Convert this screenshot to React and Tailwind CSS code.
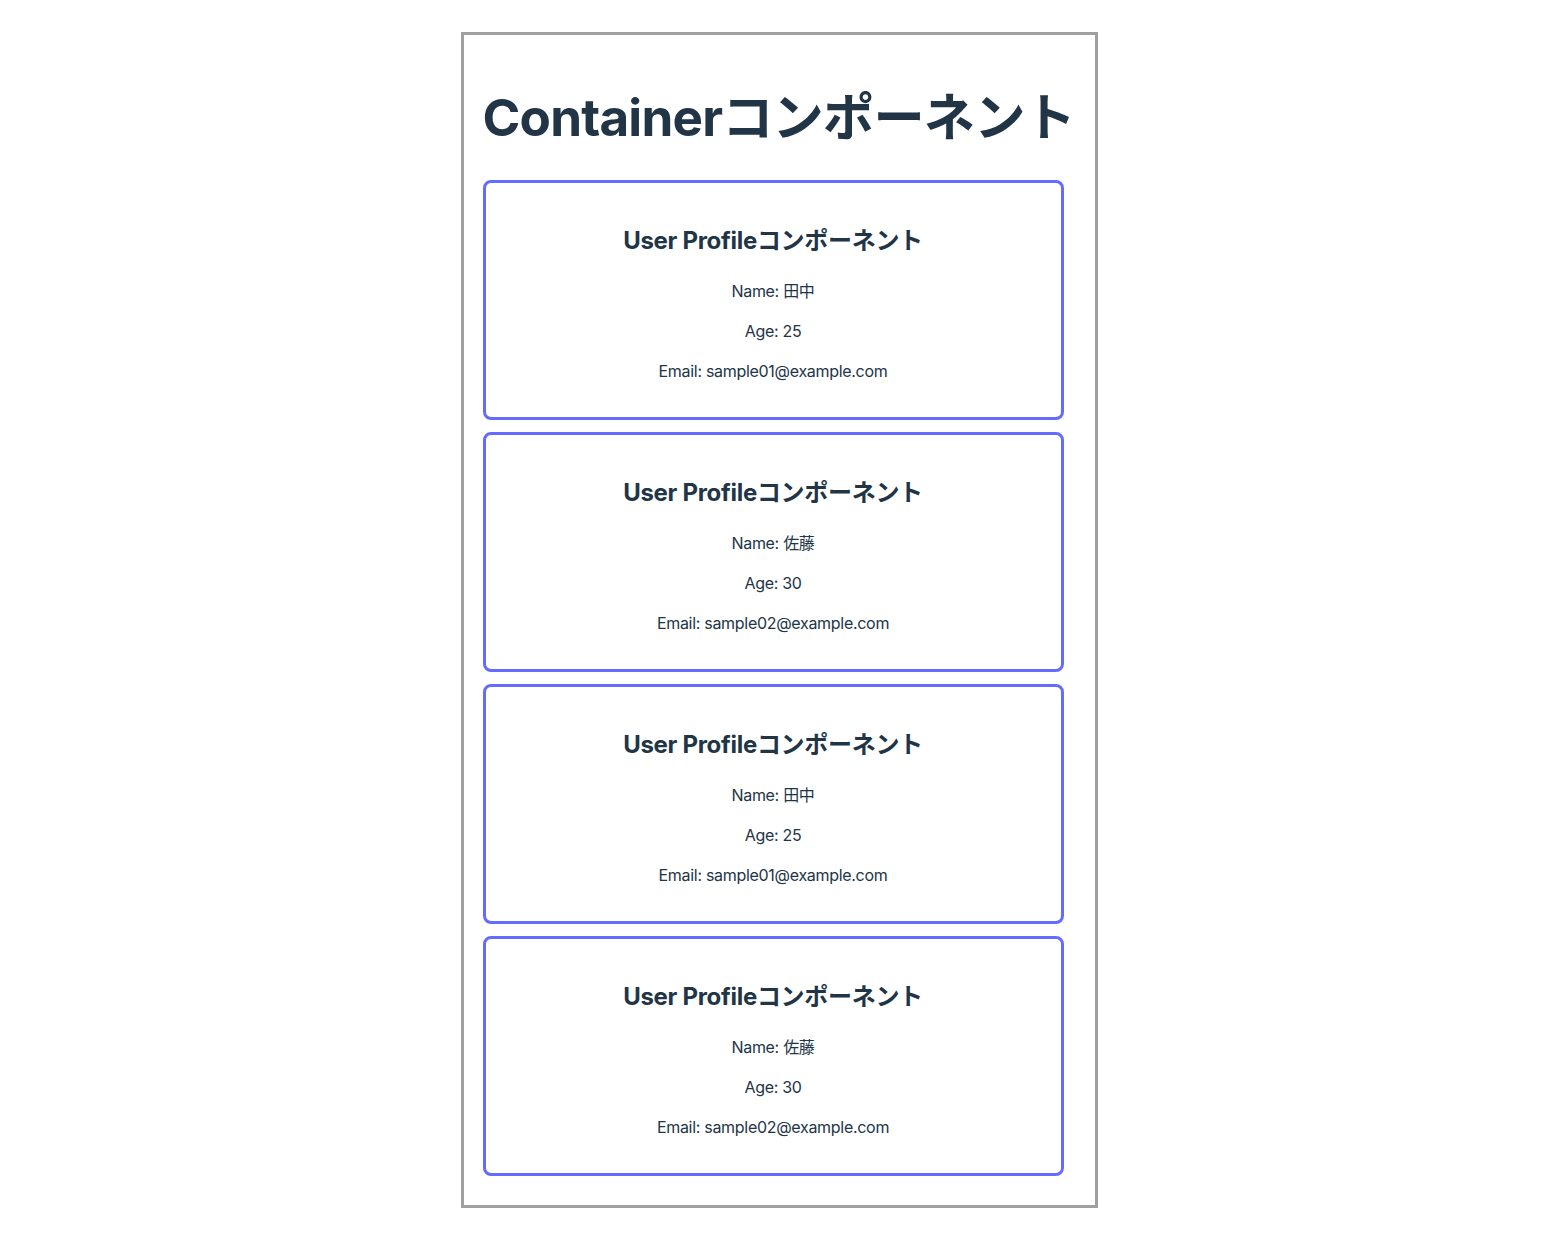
const users = [
  { name: '田中', age: 25, email: 'sample01@example.com' },
  { name: '佐藤', age: 30, email: 'sample02@example.com' },
  { name: '田中', age: 25, email: 'sample01@example.com' },
  { name: '佐藤', age: 30, email: 'sample02@example.com' },
];

function UserProfile({ user }) {
  return (
    <div className="w-[581px] h-[240px] rounded-[8px] border-[3px] border-[#646cff] px-[20px] pt-[20px] text-center tracking-[-0.3px]">
      <h2 className="text-[24px] leading-[36px] font-bold mt-[20px] mb-[20px]">User Profileコンポーネント</h2>
      <p className="text-[16px] leading-[24px]">Name: {user.name}</p>
      <p className="text-[16px] leading-[24px] mt-[16px]">Age: {user.age}</p>
      <p className="text-[16px] leading-[24px] mt-[16px]">Email: {user.email}</p>
    </div>
  );
}

export default function App() {
  return (
    <div
      className="min-h-screen bg-white text-[#213547] flex justify-center pt-[32px]"
      style={{ fontFamily: 'Inter, "Noto Sans CJK JP", sans-serif' }}
    >
      <div className="w-[637px] h-[1176px] border-[3px] border-[#a0a0a0] pl-[19px] pr-[20px] pt-[20px] pb-[30px]">
        <h1 className="text-[51.2px] leading-[1.1] font-bold mt-[34px] mb-[35px] whitespace-nowrap tracking-[-0.8px]">
          Containerコンポーネント
        </h1>
        <div className="flex flex-col gap-[12px]">
          {users.map((u, i) => (
            <UserProfile key={i} user={u} />
          ))}
        </div>
      </div>
    </div>
  );
}
